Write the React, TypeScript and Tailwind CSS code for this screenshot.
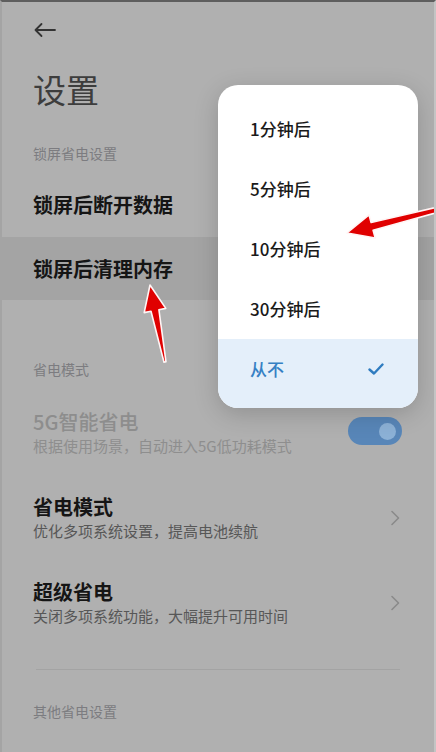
import React from "react";

const font = { fontFamily: '"Noto Sans CJK SC", "Noto Sans", sans-serif' };

function Chevron() {
  return (
    <svg width="10" height="16" viewBox="0 0 10 16" className="shrink-0">
      <path d="M2 1.5 L8.5 8 L2 14.5" fill="none" stroke="#8a8a8a" strokeWidth="1.6" strokeLinecap="round" strokeLinejoin="round" />
    </svg>
  );
}

function Row({ title, sub }: { title: string; sub: string }) {
  return (
    <div className="flex items-center justify-between pl-[33px] pr-[34px]">
      <div className="flex flex-col">
        <div className="text-[20px] leading-[26px] font-bold text-[#151515]">{title}</div>
        <div className="text-[15px] leading-[22px] text-[#575757]">{sub}</div>
      </div>
      <Chevron />
    </div>
  );
}

export default function App() {
  const opts = ["1分钟后", "5分钟后", "10分钟后", "30分钟后"];
  return (
    <div
      className="relative w-[436px] h-[752px] overflow-hidden bg-[#b0b0b0] border-t-2 border-[#5e5e5e] border-l-2 border-l-[#a4a4a4] border-r-2 border-r-[#c4c4c4]"
      style={font}
    >
      {/* back arrow */}
      <div className="h-[56px] flex items-center pl-[31px]">
        <svg width="24" height="16" viewBox="0 0 24 16">
          <path d="M22 8 H2.5 M8.5 2 L2.5 8 L8.5 14" fill="none" stroke="#333" strokeWidth="1.8" strokeLinecap="round" strokeLinejoin="round" />
        </svg>
      </div>
      {/* title */}
      <div className="h-[64px] flex items-center pl-[31px] text-[33px] text-[#3d3d3d] font-normal">设置</div>
      {/* section header */}
      <div className="h-[62px] flex items-center pl-[31px] text-[14px] text-[#7c7c80]">锁屏省电设置</div>
      <div className="h-[53px] pb-[11px] flex items-center pl-[31px] text-[20px] font-bold text-[#151515]">锁屏后断开数据</div>
      <div className="h-[63px] flex items-center pl-[31px] text-[20px] font-bold text-[#151515] bg-[#a4a4a4]">锁屏后清理内存</div>

      <div className="mt-[46px] h-[46px] flex items-center pl-[31px] text-[14px] text-[#7c7c80]">省电模式</div>

      {/* 5G row */}
      <div className="mt-[17px] flex items-center justify-between pl-[31px] pr-[32px]">
        <div className="flex flex-col">
          <div className="text-[20px] leading-[26px] font-medium text-[#8d8d8d]">5G智能省电</div>
          <div className="text-[15px] leading-[22px] text-[#8e8e8e]">根据使用场景，自动进入5G低功耗模式</div>
        </div>
        <div className="mb-[4px] w-[54px] h-[28px] rounded-full bg-[#5886b8] flex items-center justify-end pr-[6px]">
          <div className="w-[17px] h-[17px] rounded-full bg-[#8cb1d6]" />
        </div>
      </div>

      <div className="mt-[37px] -ml-[2px]">
        <Row title="省电模式" sub="优化多项系统设置，提高电池续航" />
      </div>
      <div className="mt-[37px] -ml-[2px]">
        <Row title="超级省电" sub="关闭多项系统功能，大幅提升可用时间" />
      </div>

      <div className="mt-[42px] mx-[34px] h-px bg-[#a3a3a3]" />
      <div className="mt-[30px] h-[22px] flex items-center pl-[31px] text-[14px] text-[#7c7c80]">其他省电设置</div>

      {/* popup menu */}
      <div className="absolute left-[216px] top-[83px] w-[200px] rounded-[20px] bg-white overflow-hidden shadow-[0_6px_24px_rgba(0,0,0,0.18)] pt-[14px]">
        {opts.map((o) => (
          <div key={o} className="h-[60px] flex items-center pl-[32px] text-[17px] font-medium text-[#1a1a1a]">
            {o}
          </div>
        ))}
        <div className="h-[69px] pb-[9px] flex items-center justify-between pl-[32px] pr-[34px] bg-[#e4effa]">
          <span className="text-[17px] font-medium text-[#3580c4]">从不</span>
          <svg width="16" height="12" viewBox="0 0 16 12">
            <path d="M1.5 6.5 L6 10.5 L14.5 1.5" fill="none" stroke="#2f7cc0" strokeWidth="2.4" strokeLinecap="round" strokeLinejoin="round" />
          </svg>
        </div>
      </div>

      {/* red annotation arrows */}
      <svg className="absolute left-0 top-0 pointer-events-none" width="436" height="752" viewBox="0 0 436 752">
        <polygon
          points="148,283 163.8,306.4 156.9,307.7 164,359.8 162,360.2 149,309.3 142.2,310.6"
          fill="#e00000"
          stroke="#fff5f5"
          strokeWidth="1.6"
          strokeLinejoin="round"
        />
        <polygon
          points="345,231 367,212.8 369.1,220.5 440,204 440.5,209 371.1,228.3 373.2,236"
          fill="#e00000"
          stroke="#fff5f5"
          strokeWidth="1.6"
          strokeLinejoin="round"
        />
      </svg>
    </div>
  );
}
